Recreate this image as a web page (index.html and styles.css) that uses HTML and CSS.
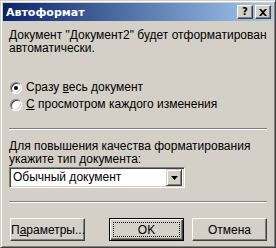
FILE: index.html
```html
<!DOCTYPE html>
<html lang="ru">
<head>
    <meta charset="UTF-8">
    <title>Автоформат</title>
    <link rel="stylesheet" href="styles.css">
</head>
<body>
    <div class="window">
        <div class="titlebar">
            <span class="title">Автоформат</span>
            <div class="caption-buttons">
                <button class="cap-btn help">?</button>
                <button class="cap-btn close">
                    <svg width="8" height="7" viewBox="0 0 8 7"><path d="M0 0h2l2 2 2-2h2L5 3.5 8 7H6L4 5 2 7H0l3-3.5z" fill="#000"/></svg>
                </button>
            </div>
        </div>

        <div class="content">
            <p class="intro">Документ "Документ2" будет отформатирован<br>автоматически.</p>

            <div class="options">
                <label class="radio-row">
                    <span class="radio checked"></span>
                    <span>Сразу <u>в</u>есь документ</span>
                </label>
                <label class="radio-row">
                    <span class="radio"></span>
                    <span><u>С</u> просмотром каждого изменения</span>
                </label>
            </div>

            <div class="separator"></div>

            <p class="hint"><u>Д</u>ля повышения качества форматирования<br>укажите тип документа:</p>

            <div class="combo">
                <span class="combo-text">Обычный документ</span>
                <span class="combo-btn">
                    <svg width="7" height="4" viewBox="0 0 7 4"><path d="M0 0h7L3.5 4z" fill="#000"/></svg>
                </span>
            </div>

            <div class="separator second"></div>

            <div class="buttons">
                <button class="btn">П<u>а</u>раметры...</button>
                <button class="btn default"><span class="focus">OK</span></button>
                <button class="btn">Отмена</button>
            </div>
        </div>
    </div>
</body>
</html>
```

FILE: styles.css
```css
body {
    margin: 0;
    background-color: #d4d0c8;
    font-family: "Liberation Sans", Arial, sans-serif;
    font-size: 12px;
    line-height: 13px;
    color: #000;
}

.window {
    width: 276px;
    height: 248px;
    box-sizing: border-box;
    background-color: #d4d0c8;
    border: 1px solid;
    border-color: #d4d0c8 #404040 #404040 #d4d0c8;
    box-shadow: inset 1px 1px #fff, inset -1px -1px #808080;
    padding: 2px;
    overflow: hidden;
}

.titlebar {
    height: 18px;
    display: flex;
    align-items: center;
    justify-content: space-between;
    background: linear-gradient(to right, #0a246a, #a6caf0);
    padding: 0 2px 0 3px;
}

.title {
    color: #fff;
    font-family: "DejaVu Sans", Verdana, sans-serif;
    font-weight: bold;
    font-size: 11px;
}

.caption-buttons {
    display: flex;
}

.cap-btn {
    width: 16px;
    height: 14px;
    padding: 0;
    margin: 0;
    background-color: #d4d0c8;
    border: 1px solid;
    border-color: #fff #404040 #404040 #fff;
    box-shadow: inset -1px -1px #808080;
    display: flex;
    align-items: center;
    justify-content: center;
    font-family: "DejaVu Sans", Verdana, sans-serif;
    font-weight: bold;
    font-size: 10px;
    line-height: 10px;
    color: #000;
}

.cap-btn.close {
    margin-left: 2px;
}

.content {
    padding: 8px 6px 0 6px;
    display: flex;
    flex-direction: column;
}

p {
    margin: 0;
    height: 26px;
}

.options {
    margin-top: 24px;
    display: flex;
    flex-direction: column;
}

.radio-row {
    height: 17px;
    display: flex;
    align-items: center;
    gap: 4px;
    padding-left: 1px;
}

.radio {
    width: 12px;
    height: 12px;
    box-sizing: border-box;
    border-radius: 50%;
    background-color: #fff;
    border: 1px solid;
    border-color: #808080 #fff #fff #808080;
    box-shadow: inset 1px 1px #404040, inset -1px -1px #d4d0c8;
    position: relative;
}

.radio.checked::after {
    content: "";
    position: absolute;
    left: 3px;
    top: 3px;
    width: 4px;
    height: 4px;
    border-radius: 50%;
    background-color: #000;
}

.separator {
    height: 0;
    margin-top: 15px;
    border-top: 1px solid #808080;
    border-bottom: 1px solid #fff;
}

.separator.second {
    margin-top: 13px;
}

.hint {
    margin-top: 10px;
}

.combo {
    margin-top: 1px;
    width: 176px;
    height: 21px;
    box-sizing: border-box;
    background-color: #fff;
    border: 1px solid;
    border-color: #808080 #fff #fff #808080;
    box-shadow: inset 1px 1px #404040, inset -1px -1px #d4d0c8;
    padding: 2px;
    display: flex;
    align-items: center;
    justify-content: space-between;
}

.combo-text {
    padding-left: 1px;
}

.combo-btn {
    width: 16px;
    height: 17px;
    box-sizing: border-box;
    background-color: #d4d0c8;
    border: 1px solid;
    border-color: #d4d0c8 #404040 #404040 #d4d0c8;
    box-shadow: inset 1px 1px #fff, inset -1px -1px #808080;
    display: flex;
    align-items: center;
    justify-content: center;
}

.buttons {
    margin-top: 15px;
    height: 23px;
    display: flex;
    gap: 8px;
    padding-left: 1px;
}

.btn {
    width: 75px;
    height: 23px;
    padding: 0;
    background-color: #d4d0c8;
    border: 1px solid;
    border-color: #fff #404040 #404040 #fff;
    box-shadow: inset -1px -1px #808080;
    font-family: "Liberation Sans", Arial, sans-serif;
    font-size: 12px;
    color: #000;
}

.btn.default {
    margin-left: auto;
    border: 1px solid #000;
    box-shadow: inset 1px 1px #fff, inset -1px -1px #404040, inset -2px -2px #808080;
    padding: 3px;
    display: flex;
}

.focus {
    flex: 1;
    border: 1px dotted #000;
    display: flex;
    align-items: center;
    justify-content: center;
}
```
